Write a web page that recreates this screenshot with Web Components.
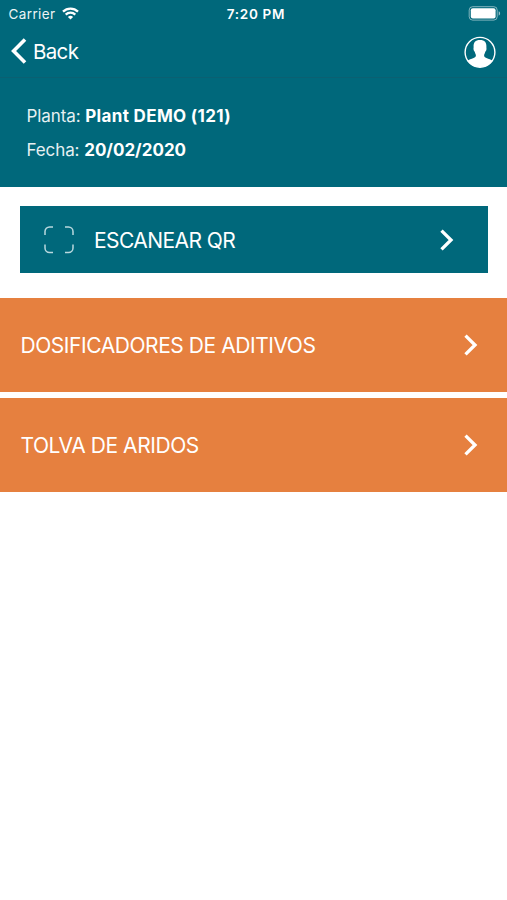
<!DOCTYPE html>
<html lang="es">
<head>
<meta charset="utf-8">
<title>Planta</title>
<style>
	html, body { margin: 0; height: 100%; background: #fff; overflow: hidden; }
	body { font-family: Inter, "Liberation Sans", sans-serif; color: #fff; }
</style>
</head>
<body>
<plant-screen></plant-screen>

<script>
class BaseElement extends HTMLElement {
	constructor() {
		super()
		this.attachShadow({ mode: "open" }).innerHTML = this.constructor.template
		}
	}

// carrier, clock and battery
class StatusBar extends BaseElement {
	static template = `<style>
			:host {
				display: grid; grid-template-columns: 1fr auto 1fr;
				align-items: center;
				height: 27px; padding: 0 6.5px 0 8.5px;
				font-size: 13.5px; line-height: 27px;
				}
			.carrier { display: flex; align-items: center; gap: 7px; }
			.label { letter-spacing: .38px; opacity: .93; padding-top: 1px; }
			.clock { font-weight: 600; letter-spacing: .68px; margin-left: 3px; padding-top: 1px; }
			.battery { justify-self: end; }
			svg { display: block; margin-bottom: 2px; }
			</style>
		<div class=carrier><span class=label><slot name=carrier></slot></span>
			<svg width="17" height="13" viewBox="0 0 17 13" fill="none" stroke="#fff" stroke-width="2.3">
				<path d="M1 4.6a10.8 10.8 0 0 1 15 0M3.7 7.6a7 7 0 0 1 9.6 0"/>
				<path d="M8.5 12.5L5.9 9.9a3.8 3.8 0 0 1 5.2 0z" fill="#fff" stroke="none"/>
			</svg></div>
		<span class=clock><slot name=clock></slot></span>
		<svg class=battery width="33" height="15" viewBox="0 0 33 15">
			<rect x="1.2" y=".7" width="28" height="13.4" rx="3.4" fill="none" stroke="#fff" stroke-opacity=".5"/>
			<rect x="2.8" y="2.3" width="24.8" height="10.2" rx="2" fill="#fff"/>
			<path d="M30.7 5.3v4.4a2.4 2.4 0 0 0 0-4.4z" fill="#fff" fill-opacity=".6"/>
		</svg>`

	static { customElements.define( "status-bar", this ) }
	}

class NavBar extends BaseElement {
	static template = `<style>
			:host {
				display: flex; align-items: center; justify-content: space-between;
				box-sizing: border-box;
				height: 51px; padding: 0 11px 0 10.5px;
				border-bottom: 1px solid #0a6072;
				}
			.back { display: flex; align-items: center; gap: 6.5px; font-size: 20.5px; line-height: 24px; letter-spacing: -.65px; }
			.back svg { margin-top: -2px; }
			svg { display: block; }
			</style>
		<div class=back>
			<svg width="16" height="26" viewBox="0 0 16 26" fill="none" stroke="#fff" stroke-width="3.6">
				<path d="M14 1.6L2.6 13 14 24.4"/>
			</svg>
			<span><slot></slot></span>
		</div>
		<svg width="32" height="32" viewBox="0 0 32 32">
			<circle cx="16" cy="16.3" r="14.9" fill="none" stroke="#fff" stroke-width="1.4"/>
			<path fill="#fff" d="M16 4c-4.7 0-6.6 2.7-6.4 6.5.1 1.4-.3 1.8 0 3.3.2 1 .9 1.3 1.2 2.3.3 1.5 1 2.2 1.1 3.2 0 1.4-.8 2.1-2.3 2.7-2.4.9-4.6 1.6-6.2 3A15 15 0 0 0 16 31a15 15 0 0 0 12.6-6c-1.6-1.4-3.8-2.1-6.2-3-1.5-.6-2.3-1.3-2.3-2.7.1-1 .8-1.7 1.1-3.2.3-1 1-1.3 1.2-2.3.3-1.5-.1-1.9 0-3.3C22.6 6.7 20.7 4 16 4z"/>
		</svg>`

	static { customElements.define( "nav-bar", this ) }
	}

class InfoLine extends BaseElement {
	static template = `<style>
			:host { display: block; font-size: 17px; line-height: 34px; white-space: nowrap; }
			.label { letter-spacing: -.1px; opacity: .9; }
			b { font-weight: 700; letter-spacing: var(--value-spacing, 0); }
			</style>
		<span class=label><slot name=label></slot></span> <b><slot></slot></b>`

	static { customElements.define( "info-line", this ) }
	}

class ChevronIcon extends BaseElement {
	static template = `<style>
			:host { display: block; flex: none; }
			svg { display: block; }
			</style>
		<svg width="14" height="22" viewBox="0 0 14 22" fill="none" stroke="#fff" stroke-width="3.3">
			<path d="M1.5 1.6L11 11 1.5 20.4"/>
		</svg>`

	static { customElements.define( "chevron-icon", this ) }
	}

class ScanButton extends BaseElement {
	static template = `<style>
			:host {
				display: flex; align-items: center;
				height: 67px; padding: 0 34px 0 24px;
				background: #00687b;
				font-size: 21px;
				}
			.label { flex: 1; margin-left: 19.5px; padding-top: 2px; letter-spacing: -.55px; white-space: nowrap; }
			svg { display: block; }
			</style>
		<svg width="30" height="28" viewBox="0 0 30 28" fill="none" stroke="#b9d8de" stroke-width="1.5">
			<path d="M1 9V5.5A4.5 4.5 0 0 1 5.5 1H9M21 1h3.5A4.5 4.5 0 0 1 29 5.5V9M29 18.5V22a4.5 4.5 0 0 1-4.5 4.5H21M9 26.5H5.5A4.5 4.5 0 0 1 1 22v-3.5"/>
		</svg>
		<span class=label><slot></slot></span>
		<chevron-icon></chevron-icon>`

	static { customElements.define( "scan-button", this ) }
	}

class MenuRow extends BaseElement {
	static template = `<style>
			:host {
				display: flex; align-items: center; justify-content: space-between;
				height: 94px; padding: 0 29px 0 20.5px;
				background: #e6803f;
				font-size: 21px; letter-spacing: -.44px;
				white-space: nowrap;
				}
			span { padding-top: 2px; }
			</style>
		<span><slot></slot></span>
		<chevron-icon></chevron-icon>`

	static { customElements.define( "menu-row", this ) }
	}

class PlantScreen extends BaseElement {
	static template = `<style>
			:host { display: flex; flex-direction: column; height: 100%; background: #fff; }
			header { background: #00687b; height: 186.5px; }
			.info { padding: 21px 26.5px 0; }
			.plant { --value-spacing: .34px; }
			scan-button { margin: 19.5px 19.5px 24.5px 20.4px; }
			.menu { display: flex; flex-direction: column; gap: 6px; }
			</style>
		<header>
			<status-bar>
				<span slot=carrier>Carrier</span>
				<span slot=clock>7:20 PM</span>
			</status-bar>
			<nav-bar>Back</nav-bar>
			<div class=info>
				<info-line class=plant><span slot=label>Planta:</span>Plant DEMO (121)</info-line>
				<info-line><span slot=label>Fecha:</span>20/02/2020</info-line>
			</div>
		</header>
		<scan-button>ESCANEAR QR</scan-button>
		<div class=menu>
			<menu-row>DOSIFICADORES DE ADITIVOS</menu-row>
			<menu-row>TOLVA DE ARIDOS</menu-row>
		</div>`

	static { customElements.define( "plant-screen", this ) }
	}
</script>
</body>
</html>
